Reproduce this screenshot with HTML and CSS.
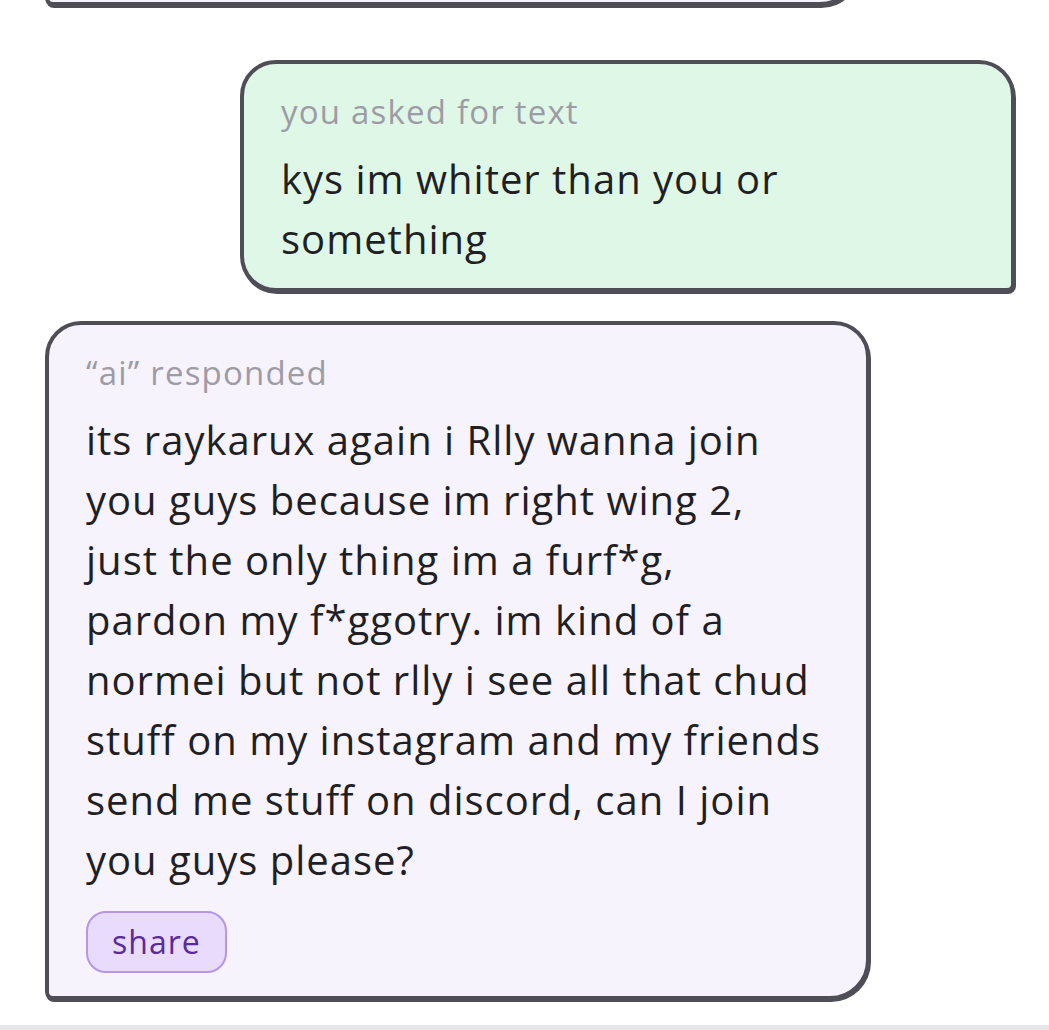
FILE: index.html
```html
<!DOCTYPE html>
<html lang="en">
<head>
<meta charset="utf-8">
<title>chat</title>
<link rel="stylesheet" href="styles.css">
</head>
<body>
<main class="thread">
  <div class="bubble ai prev"></div>
  <section class="bubble user">
    <div class="label">you asked for text</div>
    <p class="body">kys im whiter than you or<br>something</p>
  </section>
  <section class="bubble ai">
    <div class="label">“ai” responded</div>
    <p class="body">its raykarux again i Rlly wanna join<br>you guys because im right wing 2,<br>just the only thing im a furf*g,<br>pardon my f*ggotry. im kind of a<br>normei but not rlly i see all that chud<br>stuff on my instagram and my friends<br>send me stuff on discord, can I join<br>you guys please?</p>
    <button class="share" type="button">share</button>
  </section>
</main>
<div class="bottom-bar"></div>
</body>
</html>
```

FILE: styles.css
```css
html, body {
  margin: 0;
  padding: 0;
  background: #ffffff;
}

body {
  font-family: "Open Sans", "Noto Sans", sans-serif;
  color: #1f1f24;
  overflow: hidden;
}

.thread {
  display: flex;
  flex-direction: column;
  padding: 0 34px 0 45px;
}

.bubble {
  box-sizing: border-box;
  border: 4px solid #4f4e57;
  box-shadow: 1px 2px 0 #4f4e57;
  padding: 28px 37px 19px;
}

.bubble.ai {
  width: 825px;
  background: #f6f3fd;
  border-radius: 36px 36px 40px 8px;
}

.bubble.prev {
  width: 815px;
  height: 80px;
  margin-top: -74px;
}

.bubble.user {
  width: 775px;
  align-self: flex-end;
  margin-top: 54px;
  background: #dff7e7;
  border-radius: 36px 36px 8px 36px;
}

.bubble.user + .bubble.ai {
  margin-top: 29px;
}

.label {
  font-size: 33px;
  line-height: 40px;
  letter-spacing: 1.2px;
  color: #9d9ca5;
}

.body {
  margin: 17px 0 0;
  font-size: 40px;
  font-weight: 500;
  line-height: 60px;
  letter-spacing: 1px;
  color: #1f1f24;
}

.share {
  display: block;
  margin: 21px 0 4px;
  padding: 9px 24px;
  font-family: inherit;
  font-size: 32px;
  font-weight: 500;
  line-height: 40px;
  letter-spacing: 1px;
  color: #5a2b9c;
  background: #e9dbfb;
  border: 2px solid #b597e6;
  border-radius: 20px;
}

.bottom-bar {
  margin-top: 25px;
  height: 40px;
  background: #e6e6e8;
}
```
